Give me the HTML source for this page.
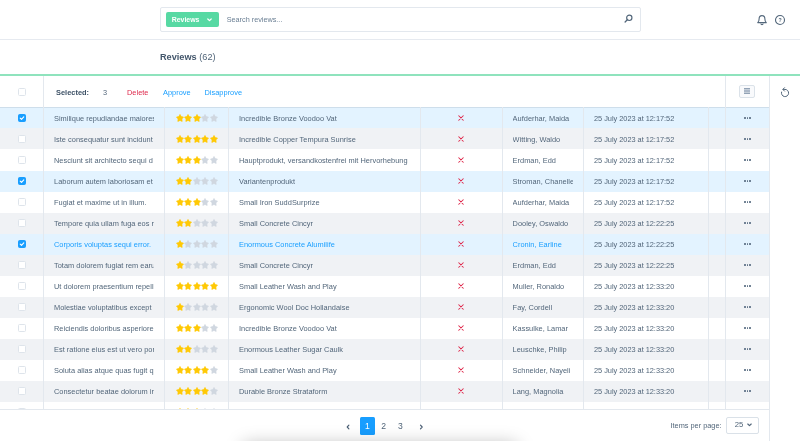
<!DOCTYPE html>
<html lang="en"><head><meta charset="utf-8"><title>Reviews</title>
<style>
*{box-sizing:border-box;margin:0;padding:0}
html,body{width:800px;height:441px;overflow:hidden;background:#fff}
body{font-family:"Liberation Sans",Arial,sans-serif;color:#52667a;font-size:7.4px;letter-spacing:.02px;position:relative}
.abs{position:absolute}
.hdr{position:absolute;left:0;top:0;width:800px;height:40px;border-bottom:1px solid #e6eaf0;background:#fff}
.search{position:absolute;left:160px;top:7px;width:481px;height:25px;border:1px solid #e3e8ee;border-radius:2px;background:#fff}
.tag{position:absolute;left:4.5px;top:4px;width:53.3px;height:15px;background:#57d9a3;border-radius:2px;color:#fff;font-weight:bold;font-size:6.95px;letter-spacing:0;line-height:15.4px;padding-left:6.2px}
.ph{position:absolute;left:65.7px;top:0;line-height:23.6px;font-size:7.28px;letter-spacing:0;color:#6c8095}
.title{position:absolute;left:160px;top:49px;font-size:9.18px;letter-spacing:0;line-height:17px;color:#52667a}
.title b{color:#44576c}
.green{position:absolute;left:0;top:74px;width:800px;height:1.5px;background:#8fe3bd}
.tb{position:absolute;left:0;top:75.5px;width:769px;height:31.5px;background:#fff}
.side{position:absolute;left:769px;top:75.5px;width:31px;height:366px;border-left:1px solid #e3e8ee;background:#fff}
.row{position:absolute;left:0;width:769px;height:21px}
.bg{position:absolute;left:0;width:769px;height:21.1px;background:#fff}
.bg.alt{background:#f0f2f5}
.bg.sel{background:#e3f3ff}
.row.hov{color:#189eff}
.row.hov .c6{color:#52667a}
.c{position:absolute;top:0;height:21px;line-height:24px;white-space:nowrap;overflow:hidden;border-right:1px solid #e3e8ee}
.c span{display:block;overflow:hidden;white-space:nowrap}
.c0{left:0;width:44px}
.c1{left:44px;width:121px;padding:0 10px}
.c2{left:165px;width:64px;padding-left:10.6px;padding-top:.4px;display:flex;align-items:center}
.c3{left:229px;width:192px;padding:0 10px}
.c4{left:421px;width:82px}
.c5{left:503px;width:81px;padding:0 10px 0 9.6px}
.c6{left:584px;width:125px;padding:0 10px;letter-spacing:-.03px}
.c7{left:709px;width:17px}
.c8{left:726px;width:43px;border-right:none;display:flex;align-items:center;justify-content:center;gap:1.05px;padding-top:1px}
.c8 i{width:1.45px;height:1.45px;border-radius:50%;background:#596d82;display:block}
.st{width:8px;height:8px;margin-right:.52px;flex:none}
.x{position:absolute;left:37.45px;top:8.4px;width:6px;height:6px}
.cb{position:absolute;left:18px;top:6.5px;width:8px;height:8px;border:1px solid #dee4eb;border-radius:1.5px;background:#fff}
.cb.on{background:#189eff;border-color:#189eff}
.cb svg{position:absolute;left:-1px;top:-1px;width:8px;height:8px}
.foot{position:absolute;left:0;top:409px;width:769px;height:32px;background:#fff;border-top:1px solid #e3e8ee}
.pg{position:absolute;top:7px;height:17.8px;line-height:18.2px;font-size:8.6px;letter-spacing:0;text-align:center;color:#52667a}
#w{position:absolute;left:0;top:0;width:800px;height:441px;overflow:hidden;will-change:transform}
</style></head><body><div id="w">
<div class="hdr">
 <div class="search">
  <div class="tag">Reviews<svg class="abs" style="left:41px;top:5.7px;width:5px;height:4px" viewBox="0 0 5 4"><path d="M.8 1 L2.5 2.7 L4.2 1" fill="none" stroke="#fff" stroke-width="1.2" stroke-linecap="round" stroke-linejoin="round"/></svg></div>
  <div class="ph">Search reviews...</div>
  <svg class="abs" style="left:462.5px;top:6.4px;width:9px;height:9px" viewBox="0 0 9 9"><circle cx="5.3" cy="3.8" r="2.65" fill="none" stroke="#52667a" stroke-width="1.15"/><path d="M3.3 5.8 L1.1 8" stroke="#52667a" stroke-width="1.25" stroke-linecap="round"/></svg>
 </div>
 <svg class="abs" style="left:756px;top:13.5px;width:12px;height:12px" viewBox="0 0 12 12"><path d="M1.7 8.6 C2.8 7.8 3.1 7 3.1 5 C3.1 3 4.2 1.6 6 1.6 C7.8 1.6 8.9 3 8.9 5 C8.9 7 9.2 7.8 10.3 8.6 Z" fill="none" stroke="#52667a" stroke-width="1.1" stroke-linejoin="round"/><path d="M4.9 9.9 C5.2 10.8 6.8 10.8 7.1 9.9" fill="none" stroke="#52667a" stroke-width="1.1" stroke-linecap="round"/></svg>
 <svg class="abs" style="left:774px;top:13.6px;width:12px;height:12px" viewBox="0 0 12 12"><circle cx="6" cy="6" r="4.5" fill="none" stroke="#52667a" stroke-width="1.1"/><text x="6" y="7.9" font-size="5.2" font-weight="bold" text-anchor="middle" fill="#52667a" font-family="Liberation Sans, sans-serif">?</text></svg>
</div>
<div class="title"><b>Reviews</b> (62)</div>
<div class="green"></div>
<div class="tb">
 <div class="c c0" style="height:32px"><span class="cb" style="top:12px"></span></div>
 <div class="abs" style="left:56px;top:0;line-height:33px;font-weight:bold;color:#3d5166">Selected:</div>
 <div class="abs" style="left:103px;top:0;line-height:33px">3</div>
 <div class="abs" style="left:127px;top:0;line-height:33px;color:#de294c">Delete</div>
 <div class="abs" style="left:163px;top:0;line-height:33px;color:#189eff">Approve</div>
 <div class="abs" style="left:204.5px;top:0;line-height:33px;color:#189eff">Disapprove</div>
 <div class="abs" style="left:725px;top:0;width:1px;height:32px;background:#e3e8ee"></div>
 <div class="abs" style="left:739px;top:9.8px;width:16px;height:12.4px;border:1px solid #dbe2e9;border-radius:2px;background:#f9fafc">
   <svg class="abs" style="left:4px;top:2.2px;width:6px;height:6px" viewBox="0 0 6 6"><path d="M0 .8H6M0 3H6M0 5.2H6" stroke="#93a3b6" stroke-width="1.45"/></svg>
 </div>
</div>
<div class="bg sel" style="top:107.4px"></div>
<div class="bg alt" style="top:128.44px"></div>
<div class="bg " style="top:149.48px"></div>
<div class="bg sel" style="top:170.52px"></div>
<div class="bg " style="top:191.56px"></div>
<div class="bg alt" style="top:212.6px"></div>
<div class="bg sel hov" style="top:233.64px"></div>
<div class="bg alt" style="top:254.68px"></div>
<div class="bg " style="top:275.72px"></div>
<div class="bg alt" style="top:296.76px"></div>
<div class="bg " style="top:317.8px"></div>
<div class="bg alt" style="top:338.84px"></div>
<div class="bg " style="top:359.88px"></div>
<div class="bg alt" style="top:380.92px"></div>
<div class="bg " style="top:401.96px"></div>
<div class="abs" style="left:0;top:107px;width:769px;height:1px;background:rgba(190,204,218,.55)"></div>
<div class="row sel" style="top:107px">
<div class="c c0"><span class="cb on"><svg viewBox="0 0 8 8"><path d="M2.2 4.1 L3.5 5.3 L5.8 2.8" fill="none" stroke="#fff" stroke-width="1.1" stroke-linecap="round" stroke-linejoin="round"/></svg></span></div><div class="c c1"><span>Similique repudiandae maiores</span></div><div class="c c2"><svg class="st" viewBox="0 0 8 8"><path d="M4.00 0.47 L5.18 2.60 L7.47 3.12 L5.90 4.95 L6.15 7.40 L4.00 6.40 L1.85 7.40 L2.10 4.95 L0.53 3.12 L2.82 2.60Z" fill="#ffc905" stroke="#ffc905" stroke-width=".7" stroke-linejoin="round"/></svg><svg class="st" viewBox="0 0 8 8"><path d="M4.00 0.47 L5.18 2.60 L7.47 3.12 L5.90 4.95 L6.15 7.40 L4.00 6.40 L1.85 7.40 L2.10 4.95 L0.53 3.12 L2.82 2.60Z" fill="#ffc905" stroke="#ffc905" stroke-width=".7" stroke-linejoin="round"/></svg><svg class="st" viewBox="0 0 8 8"><path d="M4.00 0.47 L5.18 2.60 L7.47 3.12 L5.90 4.95 L6.15 7.40 L4.00 6.40 L1.85 7.40 L2.10 4.95 L0.53 3.12 L2.82 2.60Z" fill="#ffc905" stroke="#ffc905" stroke-width=".7" stroke-linejoin="round"/></svg><svg class="st" viewBox="0 0 8 8"><path d="M4.00 0.47 L5.18 2.60 L7.47 3.12 L5.90 4.95 L6.15 7.40 L4.00 6.40 L1.85 7.40 L2.10 4.95 L0.53 3.12 L2.82 2.60Z" fill="#d0d7e0" stroke="#d0d7e0" stroke-width=".7" stroke-linejoin="round"/></svg><svg class="st" viewBox="0 0 8 8"><path d="M4.00 0.47 L5.18 2.60 L7.47 3.12 L5.90 4.95 L6.15 7.40 L4.00 6.40 L1.85 7.40 L2.10 4.95 L0.53 3.12 L2.82 2.60Z" fill="#d0d7e0" stroke="#d0d7e0" stroke-width=".7" stroke-linejoin="round"/></svg></div><div class="c c3"><span>Incredible Bronze Voodoo Vat</span></div><div class="c c4"><svg class="x" viewBox="0 0 6 6"><path d="M.75 .75 L5.25 5.25 M5.25 .75 L.75 5.25" stroke="#de294c" stroke-width="1.05" stroke-linecap="round"/></svg></div><div class="c c5"><span>Aufderhar, Maida</span></div><div class="c c6"><span>25 July 2023 at 12:17:52</span></div><div class="c c7"></div><div class="c c8"><i></i><i></i><i></i></div>
</div>
<div class="row alt" style="top:128px">
<div class="c c0"><span class="cb"></span></div><div class="c c1"><span>Iste consequatur sunt incidunt</span></div><div class="c c2"><svg class="st" viewBox="0 0 8 8"><path d="M4.00 0.47 L5.18 2.60 L7.47 3.12 L5.90 4.95 L6.15 7.40 L4.00 6.40 L1.85 7.40 L2.10 4.95 L0.53 3.12 L2.82 2.60Z" fill="#ffc905" stroke="#ffc905" stroke-width=".7" stroke-linejoin="round"/></svg><svg class="st" viewBox="0 0 8 8"><path d="M4.00 0.47 L5.18 2.60 L7.47 3.12 L5.90 4.95 L6.15 7.40 L4.00 6.40 L1.85 7.40 L2.10 4.95 L0.53 3.12 L2.82 2.60Z" fill="#ffc905" stroke="#ffc905" stroke-width=".7" stroke-linejoin="round"/></svg><svg class="st" viewBox="0 0 8 8"><path d="M4.00 0.47 L5.18 2.60 L7.47 3.12 L5.90 4.95 L6.15 7.40 L4.00 6.40 L1.85 7.40 L2.10 4.95 L0.53 3.12 L2.82 2.60Z" fill="#ffc905" stroke="#ffc905" stroke-width=".7" stroke-linejoin="round"/></svg><svg class="st" viewBox="0 0 8 8"><path d="M4.00 0.47 L5.18 2.60 L7.47 3.12 L5.90 4.95 L6.15 7.40 L4.00 6.40 L1.85 7.40 L2.10 4.95 L0.53 3.12 L2.82 2.60Z" fill="#ffc905" stroke="#ffc905" stroke-width=".7" stroke-linejoin="round"/></svg><svg class="st" viewBox="0 0 8 8"><path d="M4.00 0.47 L5.18 2.60 L7.47 3.12 L5.90 4.95 L6.15 7.40 L4.00 6.40 L1.85 7.40 L2.10 4.95 L0.53 3.12 L2.82 2.60Z" fill="#ffc905" stroke="#ffc905" stroke-width=".7" stroke-linejoin="round"/></svg></div><div class="c c3"><span>Incredible Copper Tempura Sunrise</span></div><div class="c c4"><svg class="x" viewBox="0 0 6 6"><path d="M.75 .75 L5.25 5.25 M5.25 .75 L.75 5.25" stroke="#de294c" stroke-width="1.05" stroke-linecap="round"/></svg></div><div class="c c5"><span>Witting, Waldo</span></div><div class="c c6"><span>25 July 2023 at 12:17:52</span></div><div class="c c7"></div><div class="c c8"><i></i><i></i><i></i></div>
</div>
<div class="row" style="top:149px">
<div class="c c0"><span class="cb"></span></div><div class="c c1"><span>Nesciunt sit architecto sequi d</span></div><div class="c c2"><svg class="st" viewBox="0 0 8 8"><path d="M4.00 0.47 L5.18 2.60 L7.47 3.12 L5.90 4.95 L6.15 7.40 L4.00 6.40 L1.85 7.40 L2.10 4.95 L0.53 3.12 L2.82 2.60Z" fill="#ffc905" stroke="#ffc905" stroke-width=".7" stroke-linejoin="round"/></svg><svg class="st" viewBox="0 0 8 8"><path d="M4.00 0.47 L5.18 2.60 L7.47 3.12 L5.90 4.95 L6.15 7.40 L4.00 6.40 L1.85 7.40 L2.10 4.95 L0.53 3.12 L2.82 2.60Z" fill="#ffc905" stroke="#ffc905" stroke-width=".7" stroke-linejoin="round"/></svg><svg class="st" viewBox="0 0 8 8"><path d="M4.00 0.47 L5.18 2.60 L7.47 3.12 L5.90 4.95 L6.15 7.40 L4.00 6.40 L1.85 7.40 L2.10 4.95 L0.53 3.12 L2.82 2.60Z" fill="#ffc905" stroke="#ffc905" stroke-width=".7" stroke-linejoin="round"/></svg><svg class="st" viewBox="0 0 8 8"><path d="M4.00 0.47 L5.18 2.60 L7.47 3.12 L5.90 4.95 L6.15 7.40 L4.00 6.40 L1.85 7.40 L2.10 4.95 L0.53 3.12 L2.82 2.60Z" fill="#d0d7e0" stroke="#d0d7e0" stroke-width=".7" stroke-linejoin="round"/></svg><svg class="st" viewBox="0 0 8 8"><path d="M4.00 0.47 L5.18 2.60 L7.47 3.12 L5.90 4.95 L6.15 7.40 L4.00 6.40 L1.85 7.40 L2.10 4.95 L0.53 3.12 L2.82 2.60Z" fill="#d0d7e0" stroke="#d0d7e0" stroke-width=".7" stroke-linejoin="round"/></svg></div><div class="c c3"><span>Hauptprodukt, versandkostenfrei mit Hervorhebung</span></div><div class="c c4"><svg class="x" viewBox="0 0 6 6"><path d="M.75 .75 L5.25 5.25 M5.25 .75 L.75 5.25" stroke="#de294c" stroke-width="1.05" stroke-linecap="round"/></svg></div><div class="c c5"><span>Erdman, Edd</span></div><div class="c c6"><span>25 July 2023 at 12:17:52</span></div><div class="c c7"></div><div class="c c8"><i></i><i></i><i></i></div>
</div>
<div class="row sel" style="top:170px">
<div class="c c0"><span class="cb on"><svg viewBox="0 0 8 8"><path d="M2.2 4.1 L3.5 5.3 L5.8 2.8" fill="none" stroke="#fff" stroke-width="1.1" stroke-linecap="round" stroke-linejoin="round"/></svg></span></div><div class="c c1"><span>Laborum autem laboriosam et</span></div><div class="c c2"><svg class="st" viewBox="0 0 8 8"><path d="M4.00 0.47 L5.18 2.60 L7.47 3.12 L5.90 4.95 L6.15 7.40 L4.00 6.40 L1.85 7.40 L2.10 4.95 L0.53 3.12 L2.82 2.60Z" fill="#ffc905" stroke="#ffc905" stroke-width=".7" stroke-linejoin="round"/></svg><svg class="st" viewBox="0 0 8 8"><path d="M4.00 0.47 L5.18 2.60 L7.47 3.12 L5.90 4.95 L6.15 7.40 L4.00 6.40 L1.85 7.40 L2.10 4.95 L0.53 3.12 L2.82 2.60Z" fill="#ffc905" stroke="#ffc905" stroke-width=".7" stroke-linejoin="round"/></svg><svg class="st" viewBox="0 0 8 8"><path d="M4.00 0.47 L5.18 2.60 L7.47 3.12 L5.90 4.95 L6.15 7.40 L4.00 6.40 L1.85 7.40 L2.10 4.95 L0.53 3.12 L2.82 2.60Z" fill="#d0d7e0" stroke="#d0d7e0" stroke-width=".7" stroke-linejoin="round"/></svg><svg class="st" viewBox="0 0 8 8"><path d="M4.00 0.47 L5.18 2.60 L7.47 3.12 L5.90 4.95 L6.15 7.40 L4.00 6.40 L1.85 7.40 L2.10 4.95 L0.53 3.12 L2.82 2.60Z" fill="#d0d7e0" stroke="#d0d7e0" stroke-width=".7" stroke-linejoin="round"/></svg><svg class="st" viewBox="0 0 8 8"><path d="M4.00 0.47 L5.18 2.60 L7.47 3.12 L5.90 4.95 L6.15 7.40 L4.00 6.40 L1.85 7.40 L2.10 4.95 L0.53 3.12 L2.82 2.60Z" fill="#d0d7e0" stroke="#d0d7e0" stroke-width=".7" stroke-linejoin="round"/></svg></div><div class="c c3"><span>Variantenprodukt</span></div><div class="c c4"><svg class="x" viewBox="0 0 6 6"><path d="M.75 .75 L5.25 5.25 M5.25 .75 L.75 5.25" stroke="#de294c" stroke-width="1.05" stroke-linecap="round"/></svg></div><div class="c c5"><span>Stroman, Chanelle</span></div><div class="c c6"><span>25 July 2023 at 12:17:52</span></div><div class="c c7"></div><div class="c c8"><i></i><i></i><i></i></div>
</div>
<div class="row" style="top:191px">
<div class="c c0"><span class="cb"></span></div><div class="c c1"><span>Fugiat et maxime ut in illum.</span></div><div class="c c2"><svg class="st" viewBox="0 0 8 8"><path d="M4.00 0.47 L5.18 2.60 L7.47 3.12 L5.90 4.95 L6.15 7.40 L4.00 6.40 L1.85 7.40 L2.10 4.95 L0.53 3.12 L2.82 2.60Z" fill="#ffc905" stroke="#ffc905" stroke-width=".7" stroke-linejoin="round"/></svg><svg class="st" viewBox="0 0 8 8"><path d="M4.00 0.47 L5.18 2.60 L7.47 3.12 L5.90 4.95 L6.15 7.40 L4.00 6.40 L1.85 7.40 L2.10 4.95 L0.53 3.12 L2.82 2.60Z" fill="#ffc905" stroke="#ffc905" stroke-width=".7" stroke-linejoin="round"/></svg><svg class="st" viewBox="0 0 8 8"><path d="M4.00 0.47 L5.18 2.60 L7.47 3.12 L5.90 4.95 L6.15 7.40 L4.00 6.40 L1.85 7.40 L2.10 4.95 L0.53 3.12 L2.82 2.60Z" fill="#ffc905" stroke="#ffc905" stroke-width=".7" stroke-linejoin="round"/></svg><svg class="st" viewBox="0 0 8 8"><path d="M4.00 0.47 L5.18 2.60 L7.47 3.12 L5.90 4.95 L6.15 7.40 L4.00 6.40 L1.85 7.40 L2.10 4.95 L0.53 3.12 L2.82 2.60Z" fill="#d0d7e0" stroke="#d0d7e0" stroke-width=".7" stroke-linejoin="round"/></svg><svg class="st" viewBox="0 0 8 8"><path d="M4.00 0.47 L5.18 2.60 L7.47 3.12 L5.90 4.95 L6.15 7.40 L4.00 6.40 L1.85 7.40 L2.10 4.95 L0.53 3.12 L2.82 2.60Z" fill="#d0d7e0" stroke="#d0d7e0" stroke-width=".7" stroke-linejoin="round"/></svg></div><div class="c c3"><span>Small Iron SuddSurprize</span></div><div class="c c4"><svg class="x" viewBox="0 0 6 6"><path d="M.75 .75 L5.25 5.25 M5.25 .75 L.75 5.25" stroke="#de294c" stroke-width="1.05" stroke-linecap="round"/></svg></div><div class="c c5"><span>Aufderhar, Maida</span></div><div class="c c6"><span>25 July 2023 at 12:17:52</span></div><div class="c c7"></div><div class="c c8"><i></i><i></i><i></i></div>
</div>
<div class="row alt" style="top:212px">
<div class="c c0"><span class="cb"></span></div><div class="c c1"><span>Tempore quia ullam fuga eos r</span></div><div class="c c2"><svg class="st" viewBox="0 0 8 8"><path d="M4.00 0.47 L5.18 2.60 L7.47 3.12 L5.90 4.95 L6.15 7.40 L4.00 6.40 L1.85 7.40 L2.10 4.95 L0.53 3.12 L2.82 2.60Z" fill="#ffc905" stroke="#ffc905" stroke-width=".7" stroke-linejoin="round"/></svg><svg class="st" viewBox="0 0 8 8"><path d="M4.00 0.47 L5.18 2.60 L7.47 3.12 L5.90 4.95 L6.15 7.40 L4.00 6.40 L1.85 7.40 L2.10 4.95 L0.53 3.12 L2.82 2.60Z" fill="#ffc905" stroke="#ffc905" stroke-width=".7" stroke-linejoin="round"/></svg><svg class="st" viewBox="0 0 8 8"><path d="M4.00 0.47 L5.18 2.60 L7.47 3.12 L5.90 4.95 L6.15 7.40 L4.00 6.40 L1.85 7.40 L2.10 4.95 L0.53 3.12 L2.82 2.60Z" fill="#d0d7e0" stroke="#d0d7e0" stroke-width=".7" stroke-linejoin="round"/></svg><svg class="st" viewBox="0 0 8 8"><path d="M4.00 0.47 L5.18 2.60 L7.47 3.12 L5.90 4.95 L6.15 7.40 L4.00 6.40 L1.85 7.40 L2.10 4.95 L0.53 3.12 L2.82 2.60Z" fill="#d0d7e0" stroke="#d0d7e0" stroke-width=".7" stroke-linejoin="round"/></svg><svg class="st" viewBox="0 0 8 8"><path d="M4.00 0.47 L5.18 2.60 L7.47 3.12 L5.90 4.95 L6.15 7.40 L4.00 6.40 L1.85 7.40 L2.10 4.95 L0.53 3.12 L2.82 2.60Z" fill="#d0d7e0" stroke="#d0d7e0" stroke-width=".7" stroke-linejoin="round"/></svg></div><div class="c c3"><span>Small Concrete Cincyr</span></div><div class="c c4"><svg class="x" viewBox="0 0 6 6"><path d="M.75 .75 L5.25 5.25 M5.25 .75 L.75 5.25" stroke="#de294c" stroke-width="1.05" stroke-linecap="round"/></svg></div><div class="c c5"><span>Dooley, Oswaldo</span></div><div class="c c6"><span>25 July 2023 at 12:22:25</span></div><div class="c c7"></div><div class="c c8"><i></i><i></i><i></i></div>
</div>
<div class="row sel hov" style="top:233px">
<div class="c c0"><span class="cb on"><svg viewBox="0 0 8 8"><path d="M2.2 4.1 L3.5 5.3 L5.8 2.8" fill="none" stroke="#fff" stroke-width="1.1" stroke-linecap="round" stroke-linejoin="round"/></svg></span></div><div class="c c1"><span>Corporis voluptas sequi error.</span></div><div class="c c2"><svg class="st" viewBox="0 0 8 8"><path d="M4.00 0.47 L5.18 2.60 L7.47 3.12 L5.90 4.95 L6.15 7.40 L4.00 6.40 L1.85 7.40 L2.10 4.95 L0.53 3.12 L2.82 2.60Z" fill="#ffc905" stroke="#ffc905" stroke-width=".7" stroke-linejoin="round"/></svg><svg class="st" viewBox="0 0 8 8"><path d="M4.00 0.47 L5.18 2.60 L7.47 3.12 L5.90 4.95 L6.15 7.40 L4.00 6.40 L1.85 7.40 L2.10 4.95 L0.53 3.12 L2.82 2.60Z" fill="#d0d7e0" stroke="#d0d7e0" stroke-width=".7" stroke-linejoin="round"/></svg><svg class="st" viewBox="0 0 8 8"><path d="M4.00 0.47 L5.18 2.60 L7.47 3.12 L5.90 4.95 L6.15 7.40 L4.00 6.40 L1.85 7.40 L2.10 4.95 L0.53 3.12 L2.82 2.60Z" fill="#d0d7e0" stroke="#d0d7e0" stroke-width=".7" stroke-linejoin="round"/></svg><svg class="st" viewBox="0 0 8 8"><path d="M4.00 0.47 L5.18 2.60 L7.47 3.12 L5.90 4.95 L6.15 7.40 L4.00 6.40 L1.85 7.40 L2.10 4.95 L0.53 3.12 L2.82 2.60Z" fill="#d0d7e0" stroke="#d0d7e0" stroke-width=".7" stroke-linejoin="round"/></svg><svg class="st" viewBox="0 0 8 8"><path d="M4.00 0.47 L5.18 2.60 L7.47 3.12 L5.90 4.95 L6.15 7.40 L4.00 6.40 L1.85 7.40 L2.10 4.95 L0.53 3.12 L2.82 2.60Z" fill="#d0d7e0" stroke="#d0d7e0" stroke-width=".7" stroke-linejoin="round"/></svg></div><div class="c c3"><span>Enormous Concrete Alumilife</span></div><div class="c c4"><svg class="x" viewBox="0 0 6 6"><path d="M.75 .75 L5.25 5.25 M5.25 .75 L.75 5.25" stroke="#de294c" stroke-width="1.05" stroke-linecap="round"/></svg></div><div class="c c5"><span>Cronin, Earline</span></div><div class="c c6"><span>25 July 2023 at 12:22:25</span></div><div class="c c7"></div><div class="c c8"><i></i><i></i><i></i></div>
</div>
<div class="row alt" style="top:254px">
<div class="c c0"><span class="cb"></span></div><div class="c c1"><span>Totam dolorem fugiat rem earu</span></div><div class="c c2"><svg class="st" viewBox="0 0 8 8"><path d="M4.00 0.47 L5.18 2.60 L7.47 3.12 L5.90 4.95 L6.15 7.40 L4.00 6.40 L1.85 7.40 L2.10 4.95 L0.53 3.12 L2.82 2.60Z" fill="#ffc905" stroke="#ffc905" stroke-width=".7" stroke-linejoin="round"/></svg><svg class="st" viewBox="0 0 8 8"><path d="M4.00 0.47 L5.18 2.60 L7.47 3.12 L5.90 4.95 L6.15 7.40 L4.00 6.40 L1.85 7.40 L2.10 4.95 L0.53 3.12 L2.82 2.60Z" fill="#d0d7e0" stroke="#d0d7e0" stroke-width=".7" stroke-linejoin="round"/></svg><svg class="st" viewBox="0 0 8 8"><path d="M4.00 0.47 L5.18 2.60 L7.47 3.12 L5.90 4.95 L6.15 7.40 L4.00 6.40 L1.85 7.40 L2.10 4.95 L0.53 3.12 L2.82 2.60Z" fill="#d0d7e0" stroke="#d0d7e0" stroke-width=".7" stroke-linejoin="round"/></svg><svg class="st" viewBox="0 0 8 8"><path d="M4.00 0.47 L5.18 2.60 L7.47 3.12 L5.90 4.95 L6.15 7.40 L4.00 6.40 L1.85 7.40 L2.10 4.95 L0.53 3.12 L2.82 2.60Z" fill="#d0d7e0" stroke="#d0d7e0" stroke-width=".7" stroke-linejoin="round"/></svg><svg class="st" viewBox="0 0 8 8"><path d="M4.00 0.47 L5.18 2.60 L7.47 3.12 L5.90 4.95 L6.15 7.40 L4.00 6.40 L1.85 7.40 L2.10 4.95 L0.53 3.12 L2.82 2.60Z" fill="#d0d7e0" stroke="#d0d7e0" stroke-width=".7" stroke-linejoin="round"/></svg></div><div class="c c3"><span>Small Concrete Cincyr</span></div><div class="c c4"><svg class="x" viewBox="0 0 6 6"><path d="M.75 .75 L5.25 5.25 M5.25 .75 L.75 5.25" stroke="#de294c" stroke-width="1.05" stroke-linecap="round"/></svg></div><div class="c c5"><span>Erdman, Edd</span></div><div class="c c6"><span>25 July 2023 at 12:22:25</span></div><div class="c c7"></div><div class="c c8"><i></i><i></i><i></i></div>
</div>
<div class="row" style="top:275px">
<div class="c c0"><span class="cb"></span></div><div class="c c1"><span>Ut dolorem praesentium repell</span></div><div class="c c2"><svg class="st" viewBox="0 0 8 8"><path d="M4.00 0.47 L5.18 2.60 L7.47 3.12 L5.90 4.95 L6.15 7.40 L4.00 6.40 L1.85 7.40 L2.10 4.95 L0.53 3.12 L2.82 2.60Z" fill="#ffc905" stroke="#ffc905" stroke-width=".7" stroke-linejoin="round"/></svg><svg class="st" viewBox="0 0 8 8"><path d="M4.00 0.47 L5.18 2.60 L7.47 3.12 L5.90 4.95 L6.15 7.40 L4.00 6.40 L1.85 7.40 L2.10 4.95 L0.53 3.12 L2.82 2.60Z" fill="#ffc905" stroke="#ffc905" stroke-width=".7" stroke-linejoin="round"/></svg><svg class="st" viewBox="0 0 8 8"><path d="M4.00 0.47 L5.18 2.60 L7.47 3.12 L5.90 4.95 L6.15 7.40 L4.00 6.40 L1.85 7.40 L2.10 4.95 L0.53 3.12 L2.82 2.60Z" fill="#ffc905" stroke="#ffc905" stroke-width=".7" stroke-linejoin="round"/></svg><svg class="st" viewBox="0 0 8 8"><path d="M4.00 0.47 L5.18 2.60 L7.47 3.12 L5.90 4.95 L6.15 7.40 L4.00 6.40 L1.85 7.40 L2.10 4.95 L0.53 3.12 L2.82 2.60Z" fill="#ffc905" stroke="#ffc905" stroke-width=".7" stroke-linejoin="round"/></svg><svg class="st" viewBox="0 0 8 8"><path d="M4.00 0.47 L5.18 2.60 L7.47 3.12 L5.90 4.95 L6.15 7.40 L4.00 6.40 L1.85 7.40 L2.10 4.95 L0.53 3.12 L2.82 2.60Z" fill="#ffc905" stroke="#ffc905" stroke-width=".7" stroke-linejoin="round"/></svg></div><div class="c c3"><span>Small Leather Wash and Play</span></div><div class="c c4"><svg class="x" viewBox="0 0 6 6"><path d="M.75 .75 L5.25 5.25 M5.25 .75 L.75 5.25" stroke="#de294c" stroke-width="1.05" stroke-linecap="round"/></svg></div><div class="c c5"><span>Muller, Ronaldo</span></div><div class="c c6"><span>25 July 2023 at 12:33:20</span></div><div class="c c7"></div><div class="c c8"><i></i><i></i><i></i></div>
</div>
<div class="row alt" style="top:296px">
<div class="c c0"><span class="cb"></span></div><div class="c c1"><span>Molestiae voluptatibus except</span></div><div class="c c2"><svg class="st" viewBox="0 0 8 8"><path d="M4.00 0.47 L5.18 2.60 L7.47 3.12 L5.90 4.95 L6.15 7.40 L4.00 6.40 L1.85 7.40 L2.10 4.95 L0.53 3.12 L2.82 2.60Z" fill="#ffc905" stroke="#ffc905" stroke-width=".7" stroke-linejoin="round"/></svg><svg class="st" viewBox="0 0 8 8"><path d="M4.00 0.47 L5.18 2.60 L7.47 3.12 L5.90 4.95 L6.15 7.40 L4.00 6.40 L1.85 7.40 L2.10 4.95 L0.53 3.12 L2.82 2.60Z" fill="#d0d7e0" stroke="#d0d7e0" stroke-width=".7" stroke-linejoin="round"/></svg><svg class="st" viewBox="0 0 8 8"><path d="M4.00 0.47 L5.18 2.60 L7.47 3.12 L5.90 4.95 L6.15 7.40 L4.00 6.40 L1.85 7.40 L2.10 4.95 L0.53 3.12 L2.82 2.60Z" fill="#d0d7e0" stroke="#d0d7e0" stroke-width=".7" stroke-linejoin="round"/></svg><svg class="st" viewBox="0 0 8 8"><path d="M4.00 0.47 L5.18 2.60 L7.47 3.12 L5.90 4.95 L6.15 7.40 L4.00 6.40 L1.85 7.40 L2.10 4.95 L0.53 3.12 L2.82 2.60Z" fill="#d0d7e0" stroke="#d0d7e0" stroke-width=".7" stroke-linejoin="round"/></svg><svg class="st" viewBox="0 0 8 8"><path d="M4.00 0.47 L5.18 2.60 L7.47 3.12 L5.90 4.95 L6.15 7.40 L4.00 6.40 L1.85 7.40 L2.10 4.95 L0.53 3.12 L2.82 2.60Z" fill="#d0d7e0" stroke="#d0d7e0" stroke-width=".7" stroke-linejoin="round"/></svg></div><div class="c c3"><span>Ergonomic Wool Doc Hollandaise</span></div><div class="c c4"><svg class="x" viewBox="0 0 6 6"><path d="M.75 .75 L5.25 5.25 M5.25 .75 L.75 5.25" stroke="#de294c" stroke-width="1.05" stroke-linecap="round"/></svg></div><div class="c c5"><span>Fay, Cordell</span></div><div class="c c6"><span>25 July 2023 at 12:33:20</span></div><div class="c c7"></div><div class="c c8"><i></i><i></i><i></i></div>
</div>
<div class="row" style="top:317px">
<div class="c c0"><span class="cb"></span></div><div class="c c1"><span>Reiciendis doloribus asperiore</span></div><div class="c c2"><svg class="st" viewBox="0 0 8 8"><path d="M4.00 0.47 L5.18 2.60 L7.47 3.12 L5.90 4.95 L6.15 7.40 L4.00 6.40 L1.85 7.40 L2.10 4.95 L0.53 3.12 L2.82 2.60Z" fill="#ffc905" stroke="#ffc905" stroke-width=".7" stroke-linejoin="round"/></svg><svg class="st" viewBox="0 0 8 8"><path d="M4.00 0.47 L5.18 2.60 L7.47 3.12 L5.90 4.95 L6.15 7.40 L4.00 6.40 L1.85 7.40 L2.10 4.95 L0.53 3.12 L2.82 2.60Z" fill="#ffc905" stroke="#ffc905" stroke-width=".7" stroke-linejoin="round"/></svg><svg class="st" viewBox="0 0 8 8"><path d="M4.00 0.47 L5.18 2.60 L7.47 3.12 L5.90 4.95 L6.15 7.40 L4.00 6.40 L1.85 7.40 L2.10 4.95 L0.53 3.12 L2.82 2.60Z" fill="#ffc905" stroke="#ffc905" stroke-width=".7" stroke-linejoin="round"/></svg><svg class="st" viewBox="0 0 8 8"><path d="M4.00 0.47 L5.18 2.60 L7.47 3.12 L5.90 4.95 L6.15 7.40 L4.00 6.40 L1.85 7.40 L2.10 4.95 L0.53 3.12 L2.82 2.60Z" fill="#d0d7e0" stroke="#d0d7e0" stroke-width=".7" stroke-linejoin="round"/></svg><svg class="st" viewBox="0 0 8 8"><path d="M4.00 0.47 L5.18 2.60 L7.47 3.12 L5.90 4.95 L6.15 7.40 L4.00 6.40 L1.85 7.40 L2.10 4.95 L0.53 3.12 L2.82 2.60Z" fill="#d0d7e0" stroke="#d0d7e0" stroke-width=".7" stroke-linejoin="round"/></svg></div><div class="c c3"><span>Incredible Bronze Voodoo Vat</span></div><div class="c c4"><svg class="x" viewBox="0 0 6 6"><path d="M.75 .75 L5.25 5.25 M5.25 .75 L.75 5.25" stroke="#de294c" stroke-width="1.05" stroke-linecap="round"/></svg></div><div class="c c5"><span>Kassulke, Lamar</span></div><div class="c c6"><span>25 July 2023 at 12:33:20</span></div><div class="c c7"></div><div class="c c8"><i></i><i></i><i></i></div>
</div>
<div class="row alt" style="top:338px">
<div class="c c0"><span class="cb"></span></div><div class="c c1"><span>Est ratione eius est ut vero por</span></div><div class="c c2"><svg class="st" viewBox="0 0 8 8"><path d="M4.00 0.47 L5.18 2.60 L7.47 3.12 L5.90 4.95 L6.15 7.40 L4.00 6.40 L1.85 7.40 L2.10 4.95 L0.53 3.12 L2.82 2.60Z" fill="#ffc905" stroke="#ffc905" stroke-width=".7" stroke-linejoin="round"/></svg><svg class="st" viewBox="0 0 8 8"><path d="M4.00 0.47 L5.18 2.60 L7.47 3.12 L5.90 4.95 L6.15 7.40 L4.00 6.40 L1.85 7.40 L2.10 4.95 L0.53 3.12 L2.82 2.60Z" fill="#ffc905" stroke="#ffc905" stroke-width=".7" stroke-linejoin="round"/></svg><svg class="st" viewBox="0 0 8 8"><path d="M4.00 0.47 L5.18 2.60 L7.47 3.12 L5.90 4.95 L6.15 7.40 L4.00 6.40 L1.85 7.40 L2.10 4.95 L0.53 3.12 L2.82 2.60Z" fill="#d0d7e0" stroke="#d0d7e0" stroke-width=".7" stroke-linejoin="round"/></svg><svg class="st" viewBox="0 0 8 8"><path d="M4.00 0.47 L5.18 2.60 L7.47 3.12 L5.90 4.95 L6.15 7.40 L4.00 6.40 L1.85 7.40 L2.10 4.95 L0.53 3.12 L2.82 2.60Z" fill="#d0d7e0" stroke="#d0d7e0" stroke-width=".7" stroke-linejoin="round"/></svg><svg class="st" viewBox="0 0 8 8"><path d="M4.00 0.47 L5.18 2.60 L7.47 3.12 L5.90 4.95 L6.15 7.40 L4.00 6.40 L1.85 7.40 L2.10 4.95 L0.53 3.12 L2.82 2.60Z" fill="#d0d7e0" stroke="#d0d7e0" stroke-width=".7" stroke-linejoin="round"/></svg></div><div class="c c3"><span>Enormous Leather Sugar Caulk</span></div><div class="c c4"><svg class="x" viewBox="0 0 6 6"><path d="M.75 .75 L5.25 5.25 M5.25 .75 L.75 5.25" stroke="#de294c" stroke-width="1.05" stroke-linecap="round"/></svg></div><div class="c c5"><span>Leuschke, Philip</span></div><div class="c c6"><span>25 July 2023 at 12:33:20</span></div><div class="c c7"></div><div class="c c8"><i></i><i></i><i></i></div>
</div>
<div class="row" style="top:359px">
<div class="c c0"><span class="cb"></span></div><div class="c c1"><span>Soluta alias atque quas fugit q</span></div><div class="c c2"><svg class="st" viewBox="0 0 8 8"><path d="M4.00 0.47 L5.18 2.60 L7.47 3.12 L5.90 4.95 L6.15 7.40 L4.00 6.40 L1.85 7.40 L2.10 4.95 L0.53 3.12 L2.82 2.60Z" fill="#ffc905" stroke="#ffc905" stroke-width=".7" stroke-linejoin="round"/></svg><svg class="st" viewBox="0 0 8 8"><path d="M4.00 0.47 L5.18 2.60 L7.47 3.12 L5.90 4.95 L6.15 7.40 L4.00 6.40 L1.85 7.40 L2.10 4.95 L0.53 3.12 L2.82 2.60Z" fill="#ffc905" stroke="#ffc905" stroke-width=".7" stroke-linejoin="round"/></svg><svg class="st" viewBox="0 0 8 8"><path d="M4.00 0.47 L5.18 2.60 L7.47 3.12 L5.90 4.95 L6.15 7.40 L4.00 6.40 L1.85 7.40 L2.10 4.95 L0.53 3.12 L2.82 2.60Z" fill="#ffc905" stroke="#ffc905" stroke-width=".7" stroke-linejoin="round"/></svg><svg class="st" viewBox="0 0 8 8"><path d="M4.00 0.47 L5.18 2.60 L7.47 3.12 L5.90 4.95 L6.15 7.40 L4.00 6.40 L1.85 7.40 L2.10 4.95 L0.53 3.12 L2.82 2.60Z" fill="#ffc905" stroke="#ffc905" stroke-width=".7" stroke-linejoin="round"/></svg><svg class="st" viewBox="0 0 8 8"><path d="M4.00 0.47 L5.18 2.60 L7.47 3.12 L5.90 4.95 L6.15 7.40 L4.00 6.40 L1.85 7.40 L2.10 4.95 L0.53 3.12 L2.82 2.60Z" fill="#d0d7e0" stroke="#d0d7e0" stroke-width=".7" stroke-linejoin="round"/></svg></div><div class="c c3"><span>Small Leather Wash and Play</span></div><div class="c c4"><svg class="x" viewBox="0 0 6 6"><path d="M.75 .75 L5.25 5.25 M5.25 .75 L.75 5.25" stroke="#de294c" stroke-width="1.05" stroke-linecap="round"/></svg></div><div class="c c5"><span>Schneider, Nayeli</span></div><div class="c c6"><span>25 July 2023 at 12:33:20</span></div><div class="c c7"></div><div class="c c8"><i></i><i></i><i></i></div>
</div>
<div class="row alt" style="top:380px">
<div class="c c0"><span class="cb"></span></div><div class="c c1"><span>Consectetur beatae dolorum ir</span></div><div class="c c2"><svg class="st" viewBox="0 0 8 8"><path d="M4.00 0.47 L5.18 2.60 L7.47 3.12 L5.90 4.95 L6.15 7.40 L4.00 6.40 L1.85 7.40 L2.10 4.95 L0.53 3.12 L2.82 2.60Z" fill="#ffc905" stroke="#ffc905" stroke-width=".7" stroke-linejoin="round"/></svg><svg class="st" viewBox="0 0 8 8"><path d="M4.00 0.47 L5.18 2.60 L7.47 3.12 L5.90 4.95 L6.15 7.40 L4.00 6.40 L1.85 7.40 L2.10 4.95 L0.53 3.12 L2.82 2.60Z" fill="#ffc905" stroke="#ffc905" stroke-width=".7" stroke-linejoin="round"/></svg><svg class="st" viewBox="0 0 8 8"><path d="M4.00 0.47 L5.18 2.60 L7.47 3.12 L5.90 4.95 L6.15 7.40 L4.00 6.40 L1.85 7.40 L2.10 4.95 L0.53 3.12 L2.82 2.60Z" fill="#ffc905" stroke="#ffc905" stroke-width=".7" stroke-linejoin="round"/></svg><svg class="st" viewBox="0 0 8 8"><path d="M4.00 0.47 L5.18 2.60 L7.47 3.12 L5.90 4.95 L6.15 7.40 L4.00 6.40 L1.85 7.40 L2.10 4.95 L0.53 3.12 L2.82 2.60Z" fill="#ffc905" stroke="#ffc905" stroke-width=".7" stroke-linejoin="round"/></svg><svg class="st" viewBox="0 0 8 8"><path d="M4.00 0.47 L5.18 2.60 L7.47 3.12 L5.90 4.95 L6.15 7.40 L4.00 6.40 L1.85 7.40 L2.10 4.95 L0.53 3.12 L2.82 2.60Z" fill="#d0d7e0" stroke="#d0d7e0" stroke-width=".7" stroke-linejoin="round"/></svg></div><div class="c c3"><span>Durable Bronze Strataform</span></div><div class="c c4"><svg class="x" viewBox="0 0 6 6"><path d="M.75 .75 L5.25 5.25 M5.25 .75 L.75 5.25" stroke="#de294c" stroke-width="1.05" stroke-linecap="round"/></svg></div><div class="c c5"><span>Lang, Magnolia</span></div><div class="c c6"><span>25 July 2023 at 12:33:20</span></div><div class="c c7"></div><div class="c c8"><i></i><i></i><i></i></div>
</div>
<div class="row" style="top:401px">
<div class="c c0"><span class="cb"></span></div><div class="c c1"><span></span></div><div class="c c2"><svg class="st" viewBox="0 0 8 8"><path d="M4.00 0.47 L5.18 2.60 L7.47 3.12 L5.90 4.95 L6.15 7.40 L4.00 6.40 L1.85 7.40 L2.10 4.95 L0.53 3.12 L2.82 2.60Z" fill="#ffc905" stroke="#ffc905" stroke-width=".7" stroke-linejoin="round"/></svg><svg class="st" viewBox="0 0 8 8"><path d="M4.00 0.47 L5.18 2.60 L7.47 3.12 L5.90 4.95 L6.15 7.40 L4.00 6.40 L1.85 7.40 L2.10 4.95 L0.53 3.12 L2.82 2.60Z" fill="#ffc905" stroke="#ffc905" stroke-width=".7" stroke-linejoin="round"/></svg><svg class="st" viewBox="0 0 8 8"><path d="M4.00 0.47 L5.18 2.60 L7.47 3.12 L5.90 4.95 L6.15 7.40 L4.00 6.40 L1.85 7.40 L2.10 4.95 L0.53 3.12 L2.82 2.60Z" fill="#ffc905" stroke="#ffc905" stroke-width=".7" stroke-linejoin="round"/></svg><svg class="st" viewBox="0 0 8 8"><path d="M4.00 0.47 L5.18 2.60 L7.47 3.12 L5.90 4.95 L6.15 7.40 L4.00 6.40 L1.85 7.40 L2.10 4.95 L0.53 3.12 L2.82 2.60Z" fill="#d0d7e0" stroke="#d0d7e0" stroke-width=".7" stroke-linejoin="round"/></svg><svg class="st" viewBox="0 0 8 8"><path d="M4.00 0.47 L5.18 2.60 L7.47 3.12 L5.90 4.95 L6.15 7.40 L4.00 6.40 L1.85 7.40 L2.10 4.95 L0.53 3.12 L2.82 2.60Z" fill="#d0d7e0" stroke="#d0d7e0" stroke-width=".7" stroke-linejoin="round"/></svg></div><div class="c c3"><span></span></div><div class="c c4"><svg class="x" viewBox="0 0 6 6"><path d="M.75 .75 L5.25 5.25 M5.25 .75 L.75 5.25" stroke="#de294c" stroke-width="1.05" stroke-linecap="round"/></svg></div><div class="c c5"><span></span></div><div class="c c6"><span></span></div><div class="c c7"></div><div class="c c8"><i></i><i></i><i></i></div>
</div>
<div class="side">
 <svg class="abs" style="left:9.9px;top:11.7px;width:10px;height:11px" viewBox="0 0 10 11"><path d="M3.2 2.4 H5 A3.6 3.6 0 1 1 1.52 5.07" fill="none" stroke="#52667a" stroke-width="1" stroke-linecap="round"/><path d="M4.5 .7 L2.8 2.4 L4.5 4.1" fill="none" stroke="#52667a" stroke-width="1" stroke-linecap="round" stroke-linejoin="round"/></svg>
</div>
<div class="foot">
 <svg class="abs" style="left:345.6px;top:13.6px;width:4.4px;height:6px" viewBox="0 0 4.4 6"><path d="M2.9 1.2 L1.2 3 L2.9 4.8" fill="none" stroke="#4a5e73" stroke-width="1.15" stroke-linecap="round" stroke-linejoin="round"/></svg>
 <div class="pg" style="left:359.7px;width:15.6px;background:#189eff;color:#fff;border-radius:1.5px">1</div>
 <div class="pg" style="left:376.7px;width:14px">2</div>
 <div class="pg" style="left:393.5px;width:14px">3</div>
 <svg class="abs" style="left:419.2px;top:13.6px;width:4.4px;height:6px" viewBox="0 0 4.4 6"><path d="M1.5 1.2 L3.2 3 L1.5 4.8" fill="none" stroke="#4a5e73" stroke-width="1.15" stroke-linecap="round" stroke-linejoin="round"/></svg>
 <div class="abs" style="left:670.5px;top:0;line-height:31.4px;font-size:7.35px;letter-spacing:0">Items per page:</div>
 <div class="abs" style="left:726.2px;top:7.2px;width:32.8px;height:16.4px;border:1px solid #dae1e8;border-radius:2px;line-height:14.6px;font-size:7.7px;letter-spacing:0;padding-left:7.6px">25<svg class="abs" style="left:19.6px;top:4.6px;width:5px;height:4px" viewBox="0 0 5 4"><path d="M.8 1 L2.5 2.7 L4.2 1" fill="none" stroke="#52667a" stroke-width="1.15" stroke-linecap="round" stroke-linejoin="round"/></svg></div>
</div>
<div class="abs" style="left:243px;top:443.5px;width:274px;height:30px;border-radius:3px;box-shadow:0 0 18px rgba(0,0,0,.27)"></div>
</div></body></html>
